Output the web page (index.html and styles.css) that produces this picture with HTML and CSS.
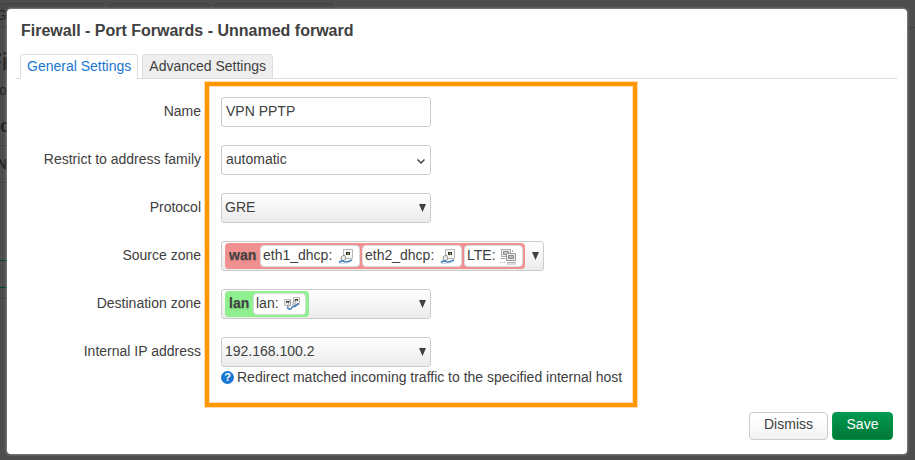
FILE: index.html
```html
<!DOCTYPE html>
<html lang="en">
<head>
<meta charset="utf-8">
<title>Firewall - Port Forwards</title>
<link rel="stylesheet" href="styles.css">
</head>
<body>
<svg class="defs" width="0" height="0">
  <symbol id="port" viewBox="0 0 18 18">
    <path d="M6.500 2.500h9v9h-9z" fill="#f6f6f5" stroke="#b5b7b3"/>
    <path d="M9 5h4v3H9z" fill="#2e3436"/><path d="M10.500 6h1.500v1.500h-1.500z" fill="#c4bd45"/>
    <path d="M4.500 9.500l3-1.500 1.500 4-3 2-2-1z" fill="#eeeeec" stroke="#888" stroke-width=".9"/>
    <path d="M2 15.500c2-1.500 4-2 5-1s4 .5 8-1.500" fill="none" stroke="#4a7ebb" stroke-width="1.700"/>
    <path d="M3 16.500c3-.5 7-.2 10-1.500" fill="none" stroke="#a9c8ec" stroke-width=".8"/>
  </symbol>
  <symbol id="bridge" viewBox="0 0 18 18">
    <path d="M1.500 4.500h6v6h-6zM10.500 2.500h6v7h-6z" fill="#eeeeec" stroke="#bbb"/>
    <path d="M3 6h3v2H3zM12 4h3v2h-3z" fill="#34383a"/><path d="M4 7h1v1H4zM13 5h1v1h-1z" fill="#c9c26b"/>
    <path d="M5.500 8l2-3v5l-3 2zM10 7l2-2v5l-2 2z" fill="#f5f5f4" stroke="#888" stroke-width=".8"/>
    <path d="M4.500 12c0 2 3 3 4 1s2-1 4-2 2-2 3-3" fill="none" stroke="#4a7ebb" stroke-width="1.600"/>
  </symbol>
  <symbol id="modem" viewBox="0 0 18 18">
    <path d="M2.500 2.500h9v7h-9zM1.500 11.500h5M13.500 5V3" fill="#eee" stroke="#aaa"/>
    <path d="M4.500 4.500h5v3h-5z" fill="#ccc" stroke="#888"/>
    <path d="M7.500 6.500h9v7h-9z" fill="#eee" stroke="#999"/>
    <path d="M9.500 8.500h5v3h-5z" fill="#bbb" stroke="#888"/>
    <path d="M8 15.500h9M8 17h9" stroke="#b5b5b5"/><path d="M1 15.500h6" stroke="#aaa" stroke-dasharray="1 1"/>
  </symbol>
</svg>
<div class="page">
  <i class="bar"></i><i class="tab t1"></i><i class="tab t2"></i><i class="tab t3"></i>
  <span class="p1">Ge</span><span class="p2">Fi</span><span class="p3">for</span><span class="p4">Po</span><span class="p5">N</span>
  <i class="rule r1"></i><i class="rule r2"></i><i class="rule green r3"></i><i class="rule green r4"></i><i class="rule r5"></i>
</div>
<main class="modal">
  <h4>Firewall - Port Forwards - Unnamed forward</h4>
  <ul class="tabs"><li class="active">General Settings</li><li>Advanced Settings</li></ul>
  <div class="row"><label>Name</label><div class="control text"><span>VPN PPTP</span></div></div>
  <div class="row"><label>Restrict to address family</label><div class="control text"><span>automatic</span><svg class="chevron" width="10" height="7" viewBox="0 0 10 7"><path d="M1.500 1.500L5 5l3.500-3.500" fill="none" stroke="#444" stroke-width="1.500"/></svg></div></div>
  <div class="row"><label>Protocol</label><div class="control drop"><span>GRE</span><i class="arrow"></i></div></div>
  <div class="row"><label>Source zone</label><div class="control drop wide"><div class="zone wan"><b>wan</b><span class="badge">eth1_dhcp: <svg><use href="#port"/></svg></span><span class="badge">eth2_dhcp: <svg><use href="#port"/></svg></span><span class="badge lte">LTE: <svg><use href="#modem"/></svg></span></div><i class="arrow"></i></div></div>
  <div class="row"><label>Destination zone</label><div class="control drop"><div class="zone lan"><b>lan</b><span class="badge">lan: <svg><use href="#bridge"/></svg></span></div><i class="arrow"></i></div></div>
  <div class="row"><label>Internal IP address</label><div class="field"><div class="control drop"><span>192.168.100.2</span><i class="arrow"></i></div>
  <div class="help"><span class="q">?</span><span class="hint">Redirect matched incoming traffic to the specified internal host</span></div></div></div>
  <div class="actions"><button class="dismiss">Dismiss</button><button class="save">Save</button></div>
  <div class="highlight"></div>
</main>
</body>
</html>
```
FILE: styles.css
```css
* { box-sizing: border-box; }
body { margin: 0; height: 460px; overflow: hidden; background: #4d4d4d; color: #404040; font: 14px/18px "Liberation Sans", Arial, sans-serif; }
.defs { position: absolute; }
.page { position: absolute; inset: 0; color: #222; overflow: hidden; }
.page > * { position: absolute; }
.bar { top: 27px; left: 0; right: 0; height: 1px; background: #424242; }
.tab { top: 3px; height: 24px; border: 1px solid #424242; border-radius: 4px 4px 0 0; background: #494949; }
.t1 { left: -5px; width: 109px; }
.t2 { left: 108px; width: 102px; }
.t3 { left: 214px; width: 120px; }
.p1 { left: -4px; top: 6px; }
.p2 { left: -13px; top: 49px; font: bold 24px/26px "Liberation Sans", sans-serif; }
.p3 { left: -5px; top: 81px; }
.p4 { left: -12px; top: 114px; font: bold 18px/24px "Liberation Sans", sans-serif; }
.p5 { left: -3px; top: 155px; font-weight: bold; }
.rule { left: 0; width: 10px; height: 1px; background: #414141; }
.r1 { top: 145px; } .r2 { top: 182px; } .r5 { top: 298px; }
.r3 { top: 260px; } .r4 { top: 287px; }
.rule.green { background: #00462b; }
.modal { position: relative; margin: 9px 8px 0 7px; height: 445px; padding: 12px 10px 0 9px; background: #fff; border-radius: 4px; box-shadow: 0 0 3px #bbb; }
h4 { margin: 0 5px; font-size: 16px; line-height: 20px; }
.tabs { display: flex; gap: 4px; margin: 13px 0 18px; padding: 0 4px; list-style: none; border-bottom: 1px solid #ddd; }
.tabs li { height: 24px; padding: 2px 6px 0; border: 1px solid #ddd; border-bottom: 0; border-radius: 4px 4px 0 0; background: #eee; white-space: nowrap; }
.tabs .active { height: 25px; margin-bottom: -1px; background: #fff; color: #1976d2; }
.row { display: flex; height: 48px; }
label { width: 185px; margin-right: 20px; padding-top: 5px; text-align: right; }
.control { display: flex; align-items: center; justify-content: space-between; width: 210px; height: 30px; padding: 0 4px; border: 1px solid #ccc; border-radius: 3px; }
.control > span { margin-top: -2px; }
.drop { padding: 0 4px 0 3px; background: linear-gradient(#fff, #ebebeb); }
.wide { width: 323px; }
.chevron { margin-top: 2px; }
.arrow { width: 7px; height: 8px; background: #404040; clip-path: polygon(0 0, 100% 0, 50% 100%); }
.zone { display: flex; height: 26px; padding: 2px 1px 2px 4px; border-radius: 4px; }
.zone b { line-height: 20px; text-shadow: 0 1px 2px rgba(0,0,0,.2); }
.wan { width: 300px; background: #f09090; }
.wan b { width: 31px; }
.lan { width: 84px; background: #90f090; }
.lan b { width: 24px; }
.badge { display: flex; justify-content: space-between; width: 100px; height: 22px; margin-right: 2px; padding: 0 4px 0 2px; border: 1px solid #ddd; border-radius: 4px; background: #fff; line-height: 19px; }
.badge.lte { width: 59px; margin-right: 0; padding-right: 5px; }
.lan .badge { width: 53px; margin: 0; }
.badge svg { width: 18px; height: 18px; margin-top: 1px; }
.help { display: flex; align-items: center; gap: 4px; margin-top: 1px; }
.q { width: 13px; height: 13px; border-radius: 50%; background: #1976d2; color: #fff; font-size: 11px; font-weight: bold; line-height: 13px; text-align: center; }
.hint { margin-left: -1px; white-space: nowrap; letter-spacing: -.008px; }
.actions { display: flex; justify-content: flex-end; gap: 4px; margin: 27px 4px 0 0; }
button { height: 28px; padding: 0 0 4px; border: 1px solid #ccc; border-radius: 4px; font: 14px "Liberation Sans", sans-serif; }
.dismiss { width: 79px; background: linear-gradient(#fff 25%, #f2f2f2); color: #404040; }
.save { width: 61px; border-color: #00994c; background: linear-gradient(#009950, #007836); color: #fff; }
.highlight { position: absolute; left: 198px; top: 73px; width: 432px; height: 325px; border: 4px solid #ff9800; outline: 1px solid #ffdbae; box-shadow: inset 0 0 0 1px #ffe0ba; }
```
